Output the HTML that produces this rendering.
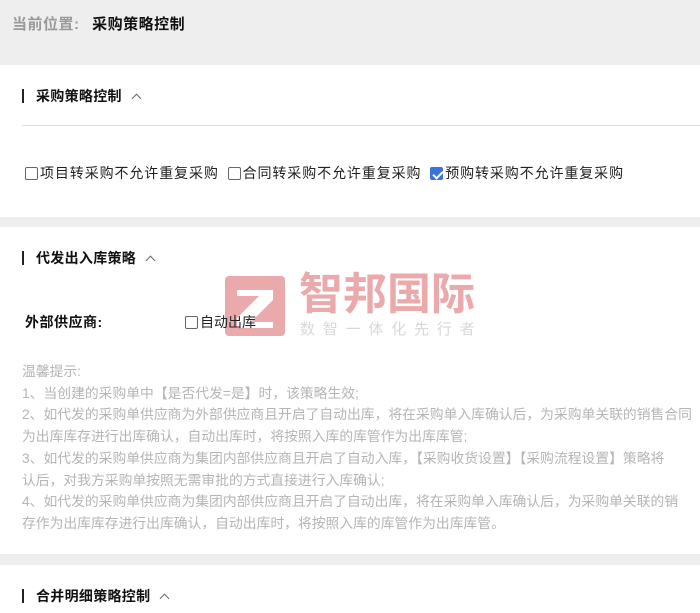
<!DOCTYPE html>
<html><head><meta charset="utf-8"><style>
*{margin:0;padding:0;box-sizing:border-box}
body{width:700px;height:613px;overflow:hidden;background:#eeeeee;font-family:"Liberation Sans","Noto Sans CJK SC",sans-serif;position:relative;color:#222}
.abs{position:absolute;white-space:nowrap}
.card{position:absolute;left:0;width:700px;background:#fff}
.title{position:absolute;left:22px;font-size:14px;font-weight:bold;color:#111;padding-left:14px;line-height:16px;letter-spacing:0.3px}
.title:before{content:"";position:absolute;left:0;top:1px;width:2px;height:14px;background:#222}
.title .car{display:inline-block;width:7px;height:7px;border-left:1.3px solid #666;border-top:1.3px solid #666;transform:rotate(45deg);margin-left:11px;position:relative;top:1px}
.cb{display:inline-block;width:13px;height:13px;border:1px solid #666;border-radius:2px;vertical-align:-2px;margin-right:2px;background:#fff}
.cb.on{background:#3a73d9;border-color:#3a73d9;position:relative}
.cb.on:after{content:"";position:absolute;left:3.5px;top:0.5px;width:4px;height:8px;border-right:2px solid #fff;border-bottom:2px solid #fff;transform:rotate(45deg)}
.lbl{font-size:14px;color:#222}
.tip{position:absolute;left:22px;top:361px;font-size:13.8px;line-height:21.7px;color:#b5b5b5;white-space:nowrap}
</style></head><body>
<div class="abs" style="left:12px;top:13px;font-size:15px;font-weight:bold;color:#999;letter-spacing:0.5px">当前位置: <span style="color:#111;margin-left:8px">采购策略控制</span></div>
<div class="card" style="top:65px;height:152px">
 <div class="title" style="top:23px">采购策略控制<span class="car"></span></div>
 <div style="position:absolute;left:22px;right:0;top:60px;height:1px;background:#ddd"></div>
 <div class="abs lbl" style="left:25px;top:98px;letter-spacing:0.9px"><span class="cb"></span>项目转采购不允许重复采购 <span class="cb" style="margin-left:4px"></span>合同转采购不允许重复采购 <span class="cb on" style="margin-left:4px"></span>预购转采购不允许重复采购</div>
</div>
<div class="card" style="top:227px;height:327px">
 <div class="title" style="top:23px">代发出入库策略<span class="car"></span></div>
 <div class="abs" style="left:25px;top:85px;font-size:14px;font-weight:bold;color:#111;letter-spacing:0.5px">外部供应商:</div>
</div>
<div class="abs" style="left:225px;top:276px;width:60px;height:60px;background:#eaa9ab;border-radius:4px"><svg width="60" height="60" viewBox="0 0 60 60"><path d="M12 14H48V24L26 46H48V52H12V42L34 20H12Z" fill="#fff"/></svg></div>
<div class="abs" style="left:299px;top:270px;font-size:44px;line-height:50px;color:#eaa9ab;letter-spacing:0px;font-weight:bold">智邦国际</div>
<div class="abs" style="left:300px;top:318px;font-size:15px;color:#d8d8d8;letter-spacing:7.8px">数智一体化先行者</div>
<div class="abs lbl" style="left:185px;top:312px"><span class="cb"></span>自动出库</div>
<div class="tip">温馨提示:<br>1、当创建的采购单中【是否代发=是】时，该策略生效;<br>2、如代发的采购单供应商为外部供应商且开启了自动出库，将在采购单入库确认后，为采购单关联的销售合同<br>为出库库存进行出库确认，自动出库时，将按照入库的库管作为出库库管;<br>3、如代发的采购单供应商为集团内部供应商且开启了自动入库，【采购收货设置】【采购流程设置】策略将<br>认后，对我方采购单按照无需审批的方式直接进行入库确认;<br>4、如代发的采购单供应商为集团内部供应商且开启了自动出库，将在采购单入库确认后，为采购单关联的销<br>存作为出库库存进行出库确认，自动出库时，将按照入库的库管作为出库库管。</div>
<div class="card" style="top:565px;height:48px">
 <div class="title" style="top:23px">合并明细策略控制<span class="car"></span></div>
</div>
</body></html>
